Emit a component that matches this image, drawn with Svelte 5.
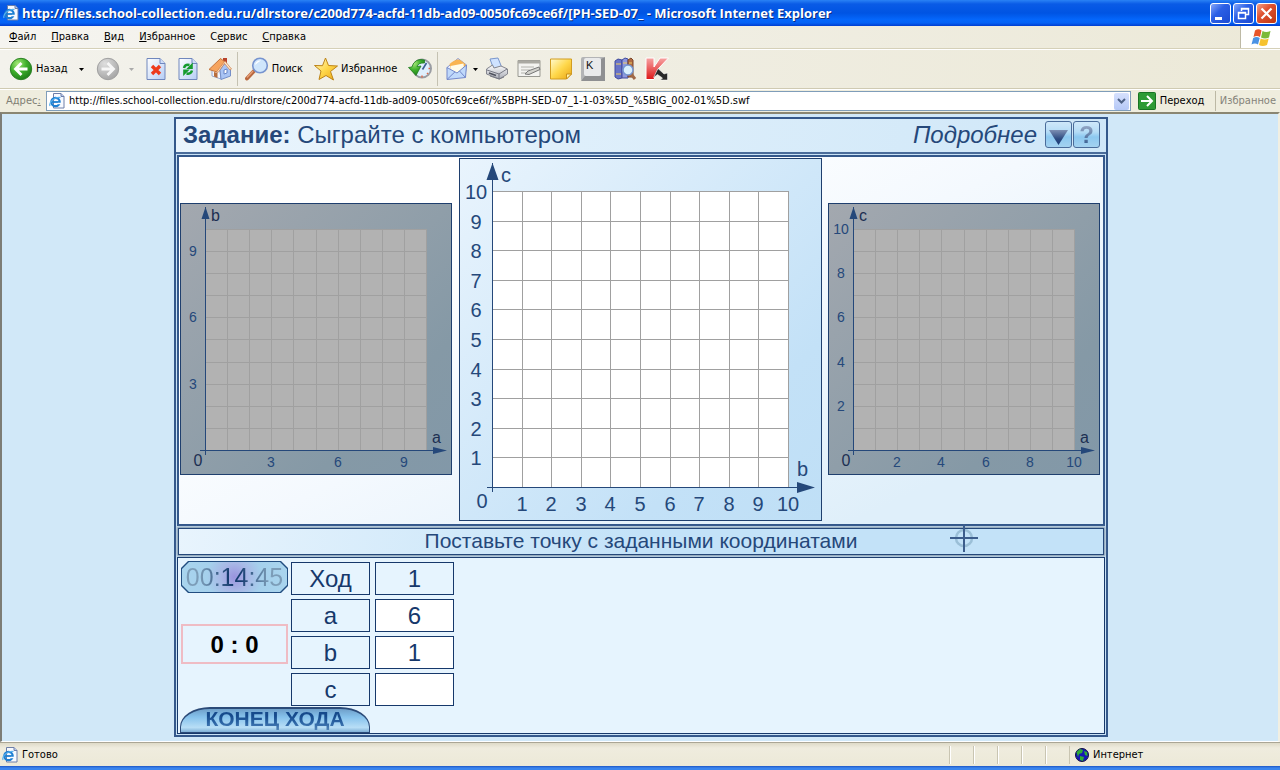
<script>
  const ten = [1, 2, 3, 4, 5, 6, 7, 8, 9, 10];
  const menu = ['Файл', 'Правка', 'Вид', 'Избранное', 'Сервис'];

  const large = { size: 363, ox: 33, oy: 329, unit: 29.6, stop: 339, tip: 356, top: 5, base: 22, half: 6, tick: 5, font: 20, zero: 20, zx: 23, zy: 350, lx: 17, ly: 353, vx: 42, vy: 24, hx: 338, hy: 318, shift: 8 };
  const small = { size: 272, ox: 25, oy: 247, unit: 22.1, stop: 254, tip: 267, top: 4, base: 16, half: 4, tick: 5, font: 14, zero: 16, zx: 18, zy: 263, lx: 13, ly: 264, vx: 31, vy: 18, hx: 252, hy: 240, shift: 5 };

  const left = { ...small, id: 'ab', name: 'График a, b', muted: true, v: 'b', h: 'a', vl: [3, 6, 9], hl: [3, 6, 9] };
  const center = { ...large, id: 'bc', name: 'График b, c', muted: false, v: 'c', h: 'b', vl: ten, hl: ten };
  const right = { ...small, id: 'ac', name: 'График a, c', muted: true, v: 'c', h: 'a', vl: [2, 4, 6, 8, 10], hl: [2, 4, 6, 8, 10] };

  let a = $state('6');
  let b = $state('1');
  let c = $state('');
  let address = $state('http://files.school-collection.edu.ru/dlrstore/c200d774-acfd-11db-ad09-0050fc69ce6f/%5BPH-SED-07_1-1-03%5D_%5BIG_002-01%5D.swf');
</script>

{#snippet chart(g)}
  <svg class="chart" class:muted={g.muted} width={g.size} height={g.size} viewBox="0 0 {g.size} {g.size}" role="img" aria-label={g.name}>
    <defs>
      <linearGradient id="bg-{g.id}" x1="0" y1="0" x2="1" y2="1">
        <stop offset="0" stop-color={g.muted ? '#a3a8af' : '#e9f4fd'} />
        <stop offset=".75" stop-color={g.muted ? '#8599a6' : '#c3e1f7'} />
        <stop offset="1" stop-color={g.muted ? '#8298a8' : '#bfdff6'} />
      </linearGradient>
    </defs>
    <rect x=".5" y=".5" width={g.size - 1} height={g.size - 1} fill="url(#bg-{g.id})" stroke="#1f3f6e" />
    <rect x={g.ox} y={g.oy - Math.round(g.unit * 10)} width={Math.round(g.unit * 10)} height={Math.round(g.unit * 10)} fill={g.muted ? '#b2b2b2' : '#fff'} />
    <g class="grid">
      {#each ten as n}
        <path d="M{g.ox + Math.round(n * g.unit)}.5 {g.oy}V{g.oy - Math.round(10 * g.unit)}M{g.ox} {g.oy - Math.round(n * g.unit)}.5H{g.ox + Math.round(10 * g.unit)}" />
      {/each}
    </g>
    <path d="M{g.ox}.5 {g.top}V{g.oy + g.tick}M{g.ox - g.tick} {g.oy}.5H{g.stop}" stroke="#25487a" />
    <path d="M{g.ox}.5 {g.top}l{g.half} {g.base - g.top}h{-2 * g.half}zM{g.tip} {g.oy}.5L{g.stop - 1} {g.oy + g.half}v{-2 * g.half + 1}z" fill="#25487a" />
    <g class="labels" font-size={g.font}>
      {#each g.vl as n}
        <text x={g.lx} y={g.oy - Math.round(n * g.unit) + g.shift} text-anchor="middle">{n}</text>
      {/each}
      {#each g.hl as n}
        <text x={g.ox + Math.round(n * g.unit)} y={g.ly} text-anchor="middle">{n}</text>
      {/each}
    </g>
    <g class="names" font-size={g.zero}>
      <text x={g.zx} y={g.zy} text-anchor="middle">0</text>
      <text x={g.vx} y={g.vy}>{g.v}</text>
      <text x={g.hx} y={g.hy}>{g.h}</text>
    </g>
  </svg>
{/snippet}

{#snippet page()}
  <svg class="page" width="16" height="16" viewBox="0 0 16 16" aria-hidden="true">
    <path d="M4.500.500h7.500l3 3v11.500h-10.500z" fill="#f7faff" stroke="#6d7fa8" />
    <path d="M12 .500v3h3" fill="#b8c8ec" stroke="#6d7fa8" />
    <circle cx="6.500" cy="9" r="4.200" fill="none" stroke="#1e7fd2" stroke-width="2.200" />
    <path d="M3 9h7.500" stroke="#1e7fd2" stroke-width="1.800" />
    <path d="M9 10.500h3" stroke="#f7faff" stroke-width="1.500" />
    <path d="M1 13C-.5 9 6 3.500 11.500 4.500" fill="none" stroke="#58b1ee" stroke-width="1.200" />
  </svg>
{/snippet}

{#snippet down()}
  <svg width="5" height="3" viewBox="0 0 5 3" aria-hidden="true"><path d="M0 0h5L2.500 3z" fill="currentColor" /></svg>
{/snippet}

<div class="window">
  <svg class="defs" width="0" height="0" aria-hidden="true">
    <defs>
      <radialGradient id="green" cx=".35" cy=".25" r=".8"><stop offset="0" stop-color="#a5e878" /><stop offset=".5" stop-color="#3fb02c" /><stop offset="1" stop-color="#1c7d18" /></radialGradient>
      <radialGradient id="gray" cx=".35" cy=".25" r=".8"><stop offset="0" stop-color="#dedede" /><stop offset="1" stop-color="#a4a4a4" /></radialGradient>
      <linearGradient id="sheet" x1="0" y1="0" x2="1" y2="1"><stop offset="0" stop-color="#fff" /><stop offset="1" stop-color="#b6cdf5" /></linearGradient>
      <linearGradient id="gold" x1="0" y1="0" x2="1" y2="1"><stop offset="0" stop-color="#fffbd0" /><stop offset=".5" stop-color="#ffd84b" /><stop offset="1" stop-color="#e9a514" /></linearGradient>
      <linearGradient id="silver" x1="0" y1="0" x2="0" y2="1"><stop offset="0" stop-color="#fdfdfe" /><stop offset="1" stop-color="#a9acb6" /></linearGradient>
      <linearGradient id="red" x1="0" y1="0" x2="0" y2="1"><stop offset="0" stop-color="#f8a3a3" /><stop offset="1" stop-color="#dc1717" /></linearGradient>
      <linearGradient id="fade" x1="0" y1="0" x2="0" y2="1"><stop offset="0" stop-color="#7d8fb3" /><stop offset=".6" stop-color="#2c4a80" /><stop offset="1" stop-color="#1b3d78" /></linearGradient>
    </defs>
  </svg>

  <header class="title">
    {@render page()}
    <h1>http://files.school-collection.edu.ru/dlrstore/c200d774-acfd-11db-ad09-0050fc69ce6f/[PH-SED-07_ - Microsoft Internet Explorer</h1>
    <button class="win" aria-label="Свернуть"><svg width="19" height="19" viewBox="0 0 19 19"><path d="M4 14.500h7" stroke="#fff" stroke-width="3" /></svg></button>
    <button class="win" aria-label="Восстановить"><svg width="19" height="19" viewBox="0 0 19 19"><path d="M7.500 7V4.500h7v6H12M7 5h8M4.500 8.500h7v6h-7zM4 9h8" fill="none" stroke="#fff" stroke-width="1.500" /></svg></button>
    <button class="win close" aria-label="Закрыть"><svg width="19" height="19" viewBox="0 0 19 19"><path d="M4.500 4.500l10 10m0-10l-10 10" stroke="#fff" stroke-width="2.200" /></svg></button>
  </header>

  <nav class="menu">
    {#each menu as m}
      <button>{#if m === 'Сервис'}С<u>е</u>рвис{:else}<u>{m[0]}</u>{m.slice(1)}{/if}</button>
    {/each}
    <button><u>С</u>правка</button>
    <span class="flag">
      <svg width="20" height="19" viewBox="0 0 20 19" aria-hidden="true">
        <path d="M4 2.500q3.500-2.500 6.500 0L9 9Q6 7 2.500 9z" fill="#e8552a" />
        <path d="M11.500 3q3.500 2 8 0L18 9.500q-4 2-8 0z" fill="#7cba3a" />
        <path d="M2.200 10Q5.500 8 8.700 10L7 16.500Q4 14.500.500 16.500z" fill="#4a92e4" />
        <path d="M9.700 10.500q4 2 8 0L16 17q-4.500 2-8 0z" fill="#f6c22d" />
      </svg>
    </span>
  </nav>

  <div class="tools">
    <button>
      <svg width="24" height="24" viewBox="0 0 24 24" aria-hidden="true"><circle cx="12" cy="12" r="10.700" fill="url(#green)" stroke="#2d8226" /><path d="M18.500 12H7m5.500-6L6.500 12l6 6" fill="none" stroke="#fff" stroke-width="2.800" /></svg>Назад
    </button>
    <button class="arrow" aria-label="Список назад">{@render down()}</button>
    <button aria-label="Вперёд">
      <svg width="24" height="24" viewBox="0 0 24 24" aria-hidden="true"><circle cx="12" cy="12" r="10.700" fill="url(#gray)" stroke="#a0a0a0" /><path d="M5.500 12H17m-5.500-6l6 6-6 6" fill="none" stroke="#f6f6f6" stroke-width="2.800" /></svg>
    </button>
    <button class="arrow off" aria-label="Список вперёд">{@render down()}</button>
    <button aria-label="Остановить">
      <svg width="24" height="24" viewBox="0 0 24 24" aria-hidden="true"><path d="M3 1.500h13l5 5v16H3z" fill="url(#sheet)" stroke="#7087bd" /><path d="M16 1.500v5h5" fill="#cfddfa" stroke="#7087bd" /><path d="M8 9l8 8m0-8l-8 8" stroke="#ee3a1c" stroke-width="3.400" /></svg>
    </button>
    <button aria-label="Обновить">
      <svg width="24" height="24" viewBox="0 0 24 24" aria-hidden="true"><path d="M3 1.500h13l5 5v16H3z" fill="url(#sheet)" stroke="#7087bd" /><path d="M16 1.500v5h5" fill="#cfddfa" stroke="#7087bd" /><path d="M8 11q1-4 5.500-3M16 13.500q-1 4-5.500 3" fill="none" stroke="#169b2e" stroke-width="2.400" /><path d="M16.800 5.500v6.500h-6.500zM7.200 19v-6.500h6.500z" fill="#169b2e" /></svg>
    </button>
    <button aria-label="Домой">
      <svg width="24" height="24" viewBox="0 0 24 24" aria-hidden="true"><path d="M15 1h4v7h-4z" fill="#b8432a" /><path d="M4 12l7-6 2 16-9-3z" fill="#f2f5fd" stroke="#9aa8cf" /><path d="M12 13l5-7 5.500 6v7L13 22.500z" fill="#a9c4f4" stroke="#758fc8" /><path d="M1 12.500L12.500 1.500 17 5l-8 10z" fill="#f6a45e" stroke="#c4733c" /><path d="M17 4l6.500 8-1.500 1-5.500-6.500L10 15.500 8.500 15z" fill="#ffe9cb" stroke="#ce7940" stroke-width=".7" /><path d="M6 15l3.500 1v5L6 19.500z" fill="#b86d3c" /><path d="M16 13l3-1v4l-3 1z" fill="#fff" stroke="#6886c8" /></svg>
    </button>
    <span class="rule"></span>
    <button class="wide">
      <svg width="24" height="24" viewBox="0 0 24 24" aria-hidden="true"><path d="M9 14L2 21.500" stroke="#b9683f" stroke-width="4" stroke-linecap="round" /><path d="M8 14l-6 6.500" stroke="#e6a078" stroke-width="1.300" /><circle cx="15" cy="8.500" r="7.300" fill="#cfe6fc" stroke="#7794cf" stroke-width="1.600" /><path d="M10 8q1-5 6-4.500-3 1.500-6 4.500z" fill="#fff" /></svg>Поиск
    </button>
    <button class="wide">
      <svg width="24" height="24" viewBox="0 0 24 24" aria-hidden="true"><path d="M11.500 1l3 7.500L23.500 9l-7 5.500 3 8.500-7.500-4.500L5 22.500l2-8.500L.500 8.500l8 .2z" fill="url(#gold)" stroke="#bd8417" stroke-linejoin="round" /></svg>Избранное
    </button>
    <button aria-label="Журнал">
      <svg width="24" height="24" viewBox="0 0 24 24" aria-hidden="true"><circle cx="14" cy="11.500" r="9" fill="#dfeffd" stroke="#9a9da3" stroke-width="2" /><path d="M14.500 12.500L18.500 6" stroke="#3d5d94" stroke-width="1.600" /><path d="M20.500 11.500h1.500M14 18.500v2M19 16l1 1" stroke="#e06a4a" stroke-width="1.500" /><path d="M16.500 3Q7 .500 3.800 10L.500 10.500 8 18.500l5-9.500-4 .500Q10.500 5.500 16.500 6z" fill="url(#green)" stroke="#207b1f" stroke-width=".8" stroke-linejoin="round" /></svg>
    </button>
    <span class="rule"></span>
    <button aria-label="Почта">
      <svg width="24" height="24" viewBox="0 0 24 24" aria-hidden="true"><path d="M2 10.500L13 1.500l8.500 6.500-1 7-17 3z" fill="#eef3fd" stroke="#8494ce" /><path d="M4.500 7q6-5 9-4.500T21 8l-1 4-14 1z" fill="#f9b450" /><path d="M5.500 9l13-2.500.5 5-8 6-5-3z" fill="#fffbe8" /><path d="M2 10.500l10 5.500 9.500-8-1 12.500-18.500 2z" fill="#c0d9fb" stroke="#7388cb" /><path d="M2 22.500l8-7.700m10.500 5.700L14.500 14" stroke="#7388cb" /></svg>
    </button>
    <button class="arrow mail" aria-label="Список почты">{@render down()}</button>
    <button aria-label="Печать">
      <svg width="24" height="24" viewBox="0 0 24 24" aria-hidden="true"><path d="M5 2l8-1 4 10-8 2z" fill="#cfe2ff" stroke="#7a97cd" /><path d="M1.500 12l6-4 1.500 3 7-2 6.500 3v5l-8 5-13-5z" fill="url(#silver)" stroke="#84858e" /><path d="M2 13l12 4 8-5M14 17v5M5 19l9 3 5-2" fill="none" stroke="#777984" /><path d="M4 16l7 2.500" stroke="#4d505c" stroke-width="1.500" /></svg>
    </button>
    <button aria-label="Правка">
      <svg width="24" height="24" viewBox="0 0 24 24" aria-hidden="true"><path d="M1 3.500h22v16H1z" fill="#f3f3f0" stroke="#999992" /><path d="M1 5h22" stroke="#aaa9a2" stroke-width="3" /><path d="M4 10h13M4 13h9M4 16h5" stroke="#b2b2ad" /><path d="M8 17l3-3 11-4 1 2.500-11 5z" fill="#d2d2cd" stroke="#777" /></svg>
    </button>
    <button aria-label="Обсудить">
      <svg width="24" height="24" viewBox="0 0 24 24" aria-hidden="true"><path d="M1.500 2h21v15l-5 5h-16z" fill="url(#gold)" stroke="#d29d21" /><path d="M17.500 22v-5h5z" fill="#fff3aa" stroke="#c98f18" /></svg>
    </button>
    <button aria-label="Клавиатура">
      <svg width="24" height="24" viewBox="0 0 24 24" aria-hidden="true"><rect width="24" height="24" rx="2" fill="#b3b4b6" /><path d="M24 0v24H0l4-5h16V2z" fill="#8f9092" /><rect x="3" y="1" width="17" height="18" rx="2" fill="#e9eaeb" /><text x="5" y="12" font-size="11" font-family="Liberation Sans, sans-serif" fill="#111">K</text></svg>
    </button>
    <button aria-label="Справочные материалы">
      <svg width="24" height="24" viewBox="0 0 24 24" aria-hidden="true"><path d="M2 4l3-2 4 1v18l-4 1-3-2z" fill="#6873c8" stroke="#404b9c" /><path d="M9 3l3-2 3 1v19H9z" fill="#8e97df" stroke="#404b9c" /><path d="M15 3l3-2 2 2v17h-5z" fill="#b16c42" stroke="#7b4528" /><path d="M3 7h5M3 17h5M10 6h4M16 6h3" stroke="#f0cd62" /><path d="M18 17l4 5" stroke="#a06948" stroke-width="3" /><circle cx="15" cy="13" r="5" fill="#d9effd" stroke="#7495d0" stroke-width="1.500" /></svg>
    </button>
    <button aria-label="Антивирус">
      <svg width="24" height="24" viewBox="0 0 24 24" aria-hidden="true"><path d="M1 1h8v9l6-9h8.500L13 12l-4 10.500H1z" fill="url(#red)" stroke="#fff" /><path d="M13 11.500l6 5.500 3.500-1V23h-7l2-2-5-3.500-4 3z" fill="#292929" stroke="#fff" stroke-width=".5" /></svg>
    </button>
  </div>

  <form class="address" onsubmit={(e) => e.preventDefault()}>
    <label for="url">Адрес<u>:</u></label>
    <div class="field">
      {@render page()}
      <input id="url" bind:value={address} spellcheck="false" />
      <button type="button" class="drop" aria-label="Показать адреса"><svg width="9" height="7" viewBox="0 0 9 7"><path d="M1 1l3.500 3.500L8 1" fill="none" stroke="#4d6185" stroke-width="2" /></svg></button>
    </div>
    <button class="go"><svg width="18" height="18" viewBox="0 0 18 18" aria-hidden="true"><rect x=".5" y=".5" width="17" height="17" rx="1" fill="#2e9a35" stroke="#197323" /><path d="M3 9h11M9 4l5 5-5 5" fill="none" stroke="#fff" stroke-width="2" /></svg>Переход</button>
    <a class="links" href="#links">Избранное</a>
  </form>

  <main>
    <div class="stage">
      <div class="task">
        <h2><strong>Задание:</strong> Сыграйте с компьютером</h2>
        <em>Подробнее</em>
        <button aria-label="Подробнее"><svg width="25" height="25" viewBox="0 0 25 25"><path d="M3 8h19l-9.500 15z" fill="url(#fade)" /></svg></button>
        <button class="help" aria-label="Помощь"><span>?</span></button>
      </div>

      <div class="charts">
        {@render chart(left)}
        {@render chart(center)}
        {@render chart(right)}
      </div>

      <div class="message">
        Поставьте точку с заданными координатами
        <svg class="sight" width="28" height="28" viewBox="0 0 28 28" aria-hidden="true"><circle cx="14" cy="14" r="8" fill="none" stroke="#8db3cc" stroke-opacity=".75" stroke-width="2.500" /><path d="M14 0v28M0 14h28" stroke="#3c5d8c" stroke-width="2" /></svg>
      </div>

      <div class="game">
        <div class="round">
          <div class="side">
            <div class="timer"><div class="face"><span>00:14:45</span></div></div>
            <div class="score">0 : 0</div>
          </div>
          <table>
            <tbody>
              <tr><th scope="row">Ход</th><td>1</td></tr>
              <tr><th scope="row"><label for="va">a</label></th><td><input id="va" bind:value={a} /></td></tr>
              <tr><th scope="row"><label for="vb">b</label></th><td><input id="vb" bind:value={b} /></td></tr>
              <tr><th scope="row"><label for="vc">c</label></th><td><input id="vc" bind:value={c} /></td></tr>
            </tbody>
          </table>
        </div>
        <button class="finish"><span>КОНЕЦ ХОДА</span></button>
      </div>
    </div>
  </main>

  <footer>
    {@render page()}
    <span class="state">Готово</span>
    <i></i><i></i><i></i><i></i><i></i>
    <div class="zone">
      <svg width="14" height="14" viewBox="0 0 14 14" aria-hidden="true"><circle cx="7" cy="7" r="6.500" fill="#1717b5" stroke="#101040" /><path d="M1.500 4L5 1l3 1-1 3-3 1-1 3zM9 3l3 1 .5 4-2.500-1zM5 8l4 1-1 4-3-1z" fill="#2fae35" /></svg>
      Интернет
    </div>
  </footer>
  <div class="taskbar"></div>
</div>

<style>
  :global(body) { background: #ece9d8; }
  * { box-sizing: border-box; }
  button, input { font: inherit; color: inherit; margin: 0; padding: 0; border: 0; background: none; }
  button { display: flex; align-items: center; white-space: nowrap; }
  svg { display: block; flex: none; }
  .defs { position: absolute; }

  .window { min-height: 100vh; display: flex; flex-direction: column; font: 11px/14px "DejaVu Sans Condensed", "DejaVu Sans", sans-serif; color: #000; background: #ece9d8; overflow: hidden; }

  .title { display: flex; align-items: center; gap: 2px; height: 26px; padding: 0 3px; background: linear-gradient(#2a82f5, #0a5be6 4px, #0054e3 50%, #0466fb 75%, #0562f5 88%, #003dd0); }
  .title h1 { flex: 1; min-width: 0; margin: 0; padding-left: 1px; font: bold 13px/20px "Open Sans", sans-serif; color: #fff; text-shadow: 1px 1px #0a2d80; white-space: nowrap; overflow: hidden; }
  .win { width: 21px; height: 21px; border: 1px solid #fff; border-radius: 3px; background: linear-gradient(135deg, #86a8fa, #2c60e6 40%, #1b4ad2); }
  .close { background: linear-gradient(135deg, #f2a188, #df5231 40%, #c03711); }

  .menu { display: flex; align-items: stretch; gap: 15px; height: 23px; padding-left: 9px; background: linear-gradient(90deg, #f5f4f0, #ece9d8); border-bottom: 1px solid #d5d0b8; }
  .flag { margin-left: auto; width: 40px; display: grid; place-items: center; background: #fff; border-left: 1px solid #bdb9a5; }

  .tools { display: flex; align-items: center; gap: 8px; height: 40px; padding-left: 9px; border-top: 1px solid #fff; border-bottom: 1px solid #cfcab2; background: linear-gradient(90deg, #f3f2ec, #ece9d8); }
  .tools button { gap: 3px; }
  .tools .wide { padding-right: 3px; }
  .tools .arrow { width: 12px; justify-content: center; }
  .tools .off { margin: 0 -2px; color: #aaa; }
  .tools .mail { margin: 0 -4px 0 -8px; }
  .rule { width: 1px; height: 34px; margin: 0 -1px 0 -3px; background: #c5c2b2; }

  .address { display: flex; align-items: center; height: 23px; padding: 0 4px 0 6px; border-top: 1px solid #fff; background: #efedde; }
  .address label { width: 40px; color: #807e74; }
  .field { flex: 1; display: flex; align-items: center; gap: 4px; height: 20px; padding: 0 1px 0 2px; border: 1px solid #7f9db9; background: #fff; }
  .field input { flex: 1; min-width: 0; outline: 0; }
  .drop { width: 15px; height: 17px; justify-content: center; border-radius: 2px; background: linear-gradient(#d6e1fd, #b5c8f7); }
  .go { gap: 4px; width: 84px; padding-left: 7px; }
  .links { padding-left: 4px; border-left: 1px solid #bcb8a4; line-height: 20px; color: #85837a; text-decoration: none; }

  main { flex: 1; padding: 3px 4px 4px 6px; border: 2px solid #7d7d76; border-top-color: #8a8672; border-right-color: #f1efe2; border-bottom: 1px solid #fff; background: #d1e8f8; font-family: "Liberation Sans", Arial, sans-serif; color: #25487a; }
  .stage { max-width: 934px; margin: 0 auto; padding: 0 1px 1px; border: 2px solid #34588b; background: #c9e2f5; display: flex; flex-direction: column; }

  .task { display: flex; align-items: center; gap: 1px; height: 35px; margin: 0 -1px 1px; padding: 0 6px 2px 7px; border-bottom: 2px solid #4a6c9a; background: linear-gradient(100deg, #eaf5fd, #cfe7f8); font-size: 24px; line-height: 28px; }
  .task h2 { flex: 1; margin: 0; font-size: 24px; font-weight: 400; white-space: nowrap; }
  .task em { margin-right: 7px; }
  .task button { width: 27px; height: 27px; justify-content: center; border: 1px solid #4a6c9a; border-radius: 3px; background: linear-gradient(#cfe8fa, #b5dcf6 40%, #8cc8f0 60%, #a4d2f0); }
  .help { font-weight: 700; }
  .help span { color: transparent; background: linear-gradient(#8fa3c2 20%, #3f6496 80%); background-clip: text; }

  .charts { display: flex; align-items: center; justify-content: space-between; padding: 1px 3px 3px 1px; border: 2px solid #34588b; background: linear-gradient(155deg, #fff 25%, #f4f9fe 50%, #dfeffa 85%); }
  .chart { font-family: "Liberation Sans", Arial, sans-serif; }
  .grid { stroke: #a0a0a0; }
  .labels, .names { fill: #25487a; }
  .muted { margin-bottom: 2px; }
  .muted .names { fill: #1c2f52; }

  .message { position: relative; height: 27px; margin: 2px 1px; border: 1px solid #25487a; box-shadow: 0 0 2px 1px #7f93a5; background: linear-gradient(100deg, #e8f4fd, #c3e2f8 50%); font-size: 21px; line-height: 24px; text-align: center; }
  .sight { position: absolute; left: 771px; top: -5px; }

  .game { padding: 3px 1px 0 3px; border: 1px solid #16386b; background: #e6f4fe; }
  .round { display: flex; }
  .side { width: 107px; }
  .timer { height: 32px; padding: 1px; background: #214d80; clip-path: polygon(7px 0, calc(100% - 7px) 0, 100% 7px, 100% calc(100% - 7px), calc(100% - 7px) 100%, 7px 100%, 0 calc(100% - 7px), 0 7px); }
  .face { height: 30px; background: radial-gradient(circle at 50% 50%, #9a93de, #a8b8e6 25%, #a5d0ec 50%, #a9d5ee); clip-path: polygon(7px 0, calc(100% - 7px) 0, 100% 7px, 100% calc(100% - 7px), calc(100% - 7px) 100%, 7px 100%, 0 calc(100% - 7px), 0 7px); font-size: 25px; line-height: 30px; text-align: center; }
  .face span { color: transparent; background: radial-gradient(circle, #163c70 15%, #4b6f96 40%, #7c9db8 70%); background-clip: text; }
  .score { height: 40px; margin-top: 31px; border: 2px solid #efbcc4; color: #000; font-weight: 700; font-size: 24px; line-height: 38px; text-align: center; }

  table { margin: -3px 0 -4px -2px; border-spacing: 5px 4px; font-size: 24px; line-height: 30px; color: #16386b; }
  th, td { width: 79px; height: 33px; padding: 0; border: 1px solid #16386b; font-weight: 400; text-align: center; }
  td input { display: block; width: 100%; height: 31px; background: #fff; text-align: center; outline: 0; }

  .finish { width: 190px; height: 26px; margin: 1px 0 0 -1px; justify-content: center; border: 1px solid #2b4a78; border-top-width: 2px; border-radius: 30px 30px 0 0 / 20px 20px 0 0; background: linear-gradient(#6f9fc9, #86c2ec 35%, #b8def6 80%, #7fb0d6); font-weight: 700; font-size: 21px; line-height: 20px; }
  .finish span { padding-bottom: 3px; color: transparent; background: linear-gradient(#164a8c 30%, #2c65a5 60%, #5d8dbd); background-clip: text; }

  footer { display: flex; align-items: center; gap: 4px; height: 24px; padding-left: 2px; border-top: 1px solid #aaa695; background: linear-gradient(#dedac8, #efecde 5px, #ece9d8); }
  .state { flex: 1; }
  footer i { width: 20px; height: 18px; border-left: 1px solid #c9c5b2; box-shadow: inset 1px 0 #fff; }
  .zone { display: flex; align-items: center; gap: 4px; width: 211px; height: 18px; padding-left: 5px; border-left: 1px solid #c9c5b2; }
  .taskbar { height: 4px; background: linear-gradient(#1d56c4, #3a85ee 2px); }
</style>
